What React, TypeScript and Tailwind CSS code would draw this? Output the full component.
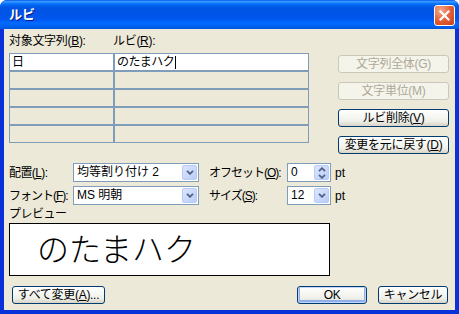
import React from 'react';

const ui = "font-['Liberation_Sans','Noto_Sans_CJK_JP',sans-serif]";

const Chevron = ({ up = false }: { up?: boolean }) => (
  <svg width="8" height="5" viewBox="0 0 8 5" className={up ? 'rotate-180' : ''}>
    <path d="M1 0.8 L4 3.8 L7 0.8" fill="none" stroke="#4D6185" strokeWidth="1.8" />
  </svg>
);

const DropButton = ({ spin = false }: { spin?: boolean }) => (
  <span className="flex h-[15px] w-[15px] flex-col items-center justify-center gap-[2px] rounded-[2px] border border-[#B7CBF7] bg-[linear-gradient(135deg,#DCE6FD,#B9CCF8)]">
    {spin ? (
      <>
        <Chevron up />
        <Chevron />
      </>
    ) : (
      <Chevron />
    )}
  </span>
);

const Field = ({ value, className, spin = false }: { value: string; className: string; spin?: boolean }) => (
  <div className={`flex h-[19px] shrink-0 items-center border border-[#7F9DB9] bg-white pl-[3px] pr-px ${className}`}>
    <span className="flex-1 whitespace-nowrap text-[12px] leading-[15px]">{value}</span>
    <DropButton spin={spin} />
  </div>
);

const XpButton = ({
  children,
  className = '',
  disabled = false,
  isDefault = false,
}: {
  children: React.ReactNode;
  className?: string;
  disabled?: boolean;
  isDefault?: boolean;
}) => {
  const look = disabled
    ? 'border-[#C9C7BA] bg-[#F5F4EA] text-[#ACA899]'
    : isDefault
      ? 'border-[#003C74] bg-[linear-gradient(#FFFFFF,#F0F0EA_70%,#DCD8CB)] shadow-[inset_0_0_0_1px_#C2D6F7,inset_0_-1px_0_2px_#8FAEEB]'
      : 'border-[#003C74] bg-[linear-gradient(#FFFFFF,#F0F0EA_70%,#D8D3C4)]';
  return (
    <div className={`flex h-[18px] shrink-0 items-center justify-center whitespace-nowrap rounded-[3px] border text-[12px] leading-[14px] tracking-[-0.3px] ${look} ${className}`}>
      {children}
    </div>
  );
};

const rows = [
  { base: '日', ruby: 'のたまハク' },
  { base: '', ruby: '' },
  { base: '', ruby: '' },
  { base: '', ruby: '' },
  { base: '', ruby: '' },
];

export default function App() {
  return (
    <div className={`h-[314px] w-[459px] bg-white ${ui}`}>
      <div className="flex h-full flex-col overflow-hidden rounded-t-[7px] bg-[#0831D9]">
        <div className="flex h-[29px] shrink-0 items-center pl-[9px] pr-[4px] bg-[linear-gradient(180deg,#0058EE_0%,#3A93FF_5%,#288EFF_8%,#127DFF_11%,#036FFC_14%,#0262EE_19%,#0057E5_26%,#0054E3_32%,#0055EB_60%,#005BF5_70%,#026AFE_80%,#0062EF_90%,#0056DE_100%)]">
          <span className="flex-1 pt-px text-[13px] font-bold leading-[16px] text-white [text-shadow:1px_1px_0_#0A1883]">ルビ</span>
          <div className="mt-px flex h-[21px] w-[21px] items-center justify-center rounded-[3px] border border-white bg-[radial-gradient(circle_at_30%_25%,#F3A98D,#E25B33_55%,#C4401A)]">
            <svg width="11" height="11" viewBox="0 0 11 11">
              <path d="M1.5 1.5 L9.5 9.5 M9.5 1.5 L1.5 9.5" stroke="white" strokeWidth="2.2" strokeLinecap="square" />
            </svg>
          </div>
        </div>

        <div className="flex min-h-0 flex-1 pb-[4px] pl-[4px] pr-[4px]">
          <div className="flex flex-1 flex-col bg-[#ECE9D8] pr-[6px] pt-[6px] text-[12px] text-black">
            {/* list + side buttons */}
            <div className="flex items-start">
              <div className="ml-[5px] w-[300px]">
                <div className="mb-[5px] flex h-[13px] items-center whitespace-nowrap leading-[13px]">
                  <span className="w-[104px] tracking-[-0.3px]">
                    対象文字列(<u>B</u>):
                  </span>
                  <span className="tracking-[-0.3px]">
                    ルビ(<u>R</u>):
                  </span>
                </div>
                <div className="grid grid-cols-[105px_195px]">
                  {rows.map((r, i) => (
                    <React.Fragment key={i}>
                      <div className={`flex h-[18px] items-center border border-[#7F9DB9] pl-[2px] leading-[14px] ${i === 0 ? 'bg-white' : ''}`}>
                        {r.base}
                      </div>
                      <div className={`flex h-[18px] items-center border border-[#7F9DB9] pl-[2px] leading-[14px] tracking-[-0.5px] ${i === 0 ? 'bg-white' : ''}`}>
                        {r.ruby}
                        {i === 0 && <span className="ml-px h-[13px] border-l border-black" />}
                      </div>
                    </React.Fragment>
                  ))}
                </div>
              </div>
              <div className="ml-[29px] flex w-[111px] flex-col gap-[9px] pt-[20px]">
                <XpButton disabled>文字列全体(G)</XpButton>
                <XpButton disabled>文字単位(M)</XpButton>
                <XpButton>
                  ルビ削除(<u>V</u>)
                </XpButton>
                <XpButton>
                  変更を元に戻す(<u>D</u>)
                </XpButton>
              </div>
            </div>

            {/* options */}
            <div className="ml-[5px] mt-[9px] flex items-center whitespace-nowrap leading-[14px]">
              <span className="w-[64px] shrink-0 tracking-[-0.6px]">
                配置(<u>L</u>):
              </span>
              <Field value="均等割り付け 2" className="w-[126px]" />
              <span className="ml-[10px] w-[78px] shrink-0 tracking-[-1px]">
                オフセット(<u>O</u>):
              </span>
              <Field value="0" className="w-[44px]" spin />
              <span className="ml-[4px]">pt</span>
            </div>
            <div className="ml-[5px] mt-[4px] flex items-center whitespace-nowrap leading-[14px]">
              <span className="w-[64px] shrink-0 tracking-[-1px]">
                フォント(<u>F</u>):
              </span>
              <Field value="MS 明朝" className="w-[126px]" />
              <span className="ml-[10px] w-[78px] shrink-0 tracking-[-1px]">
                サイズ(<u>S</u>):
              </span>
              <Field value="12" className="w-[44px]" />
              <span className="ml-[4px]">pt</span>
            </div>

            {/* preview */}
            <div className="ml-[5px] mt-[3px] h-[13px] leading-[13px] tracking-[-0.5px]">プレビュー</div>
            <div className="ml-[5px] mt-[2px] flex h-[53px] w-[321px] shrink-0 items-start border border-black bg-white pl-[27px] pt-[3px]">
              <span className="font-['Noto_Sans_CJK_JP',sans-serif] text-[32px] font-light leading-[40px]">のたまハク</span>
            </div>

            {/* footer */}
            <div className="mr-px mt-[10px] flex items-center">
              <XpButton className="ml-[8px] w-[93px]">
                すべて変更(<u>A</u>)...
              </XpButton>
              <div className="flex-1" />
              <XpButton isDefault className="w-[70px]">
                OK
              </XpButton>
              <XpButton className="ml-[11px] w-[70px]">キャンセル</XpButton>
            </div>
          </div>
        </div>
      </div>
    </div>
  );
}
